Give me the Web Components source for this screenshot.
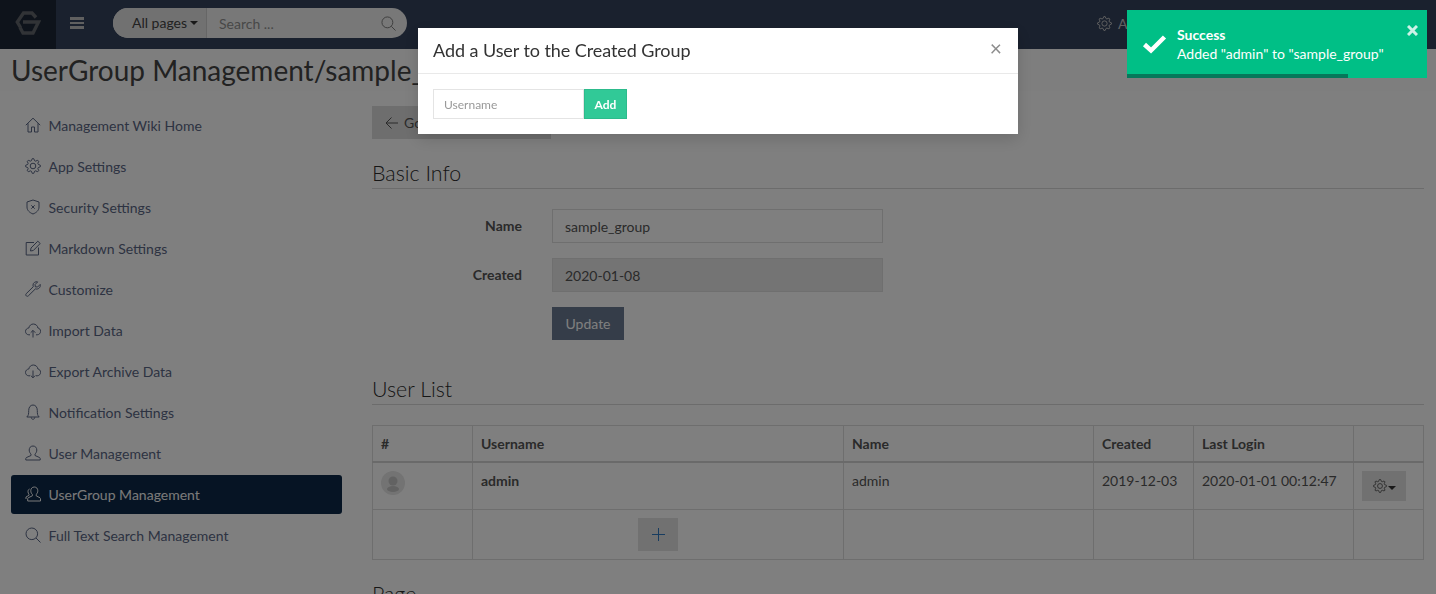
<!DOCTYPE html>
<html>
<head>
<meta charset="utf-8">
<title>UserGroup Management</title>
<style>
  html, body { margin: 0; height: 100%; overflow: hidden; }
  body { font-family: Lato, "Liberation Sans", sans-serif; font-size: 14px; color: #555; background: #fff; }
</style>
</head>
<body>
<app-navbar></app-navbar>
<page-title>UserGroup Management/sample_group</page-title>
<admin-layout>
  <admin-sidebar slot="side">
    <side-item icon="home">Management Wiki Home</side-item>
    <side-item icon="gear">App Settings</side-item>
    <side-item icon="shield">Security Settings</side-item>
    <side-item icon="edit">Markdown Settings</side-item>
    <side-item icon="wrench">Customize</side-item>
    <side-item icon="upload">Import Data</side-item>
    <side-item icon="download">Export Archive Data</side-item>
    <side-item icon="bell">Notification Settings</side-item>
    <side-item icon="user">User Management</side-item>
    <side-item icon="users" active>UserGroup Management</side-item>
    <side-item icon="search">Full Text Search Management</side-item>
  </admin-sidebar>
  <back-button>Go back to list</back-button>
  <section-heading>Basic Info</section-heading>
  <basic-form></basic-form>
  <section-heading style="margin-top:35px">User List</section-heading>
  <user-table></user-table>
  <section-heading style="margin-top:20px">Page</section-heading>
</admin-layout>
<modal-backdrop></modal-backdrop>
<add-user-modal></add-user-modal>
<toast-note heading="Success">Added "admin" to "sample_group"</toast-note>

<script>
'use strict';

// 8 tooth outline for the gear icon
function gearPath() {
  let d = '';
  for (let i = 0; i < 32; i++) {
    const step = i % 4;
    const r = (step === 0 || step === 1) ? 7.4 : 5.5;
    const a = (i / 32) * Math.PI * 2 - 0.1;
    d += (i ? 'L' : 'M') + (8 + r * Math.cos(a)).toFixed(2) + ' ' + (8 + r * Math.sin(a)).toFixed(2);
  }
  return d + 'z';
}

const ICONS = {
  home: '<path d="M.8 8.200 8 1.200l7.200 7M3 6.300V15H6.500V10H9.500V15H13V6.300"/>',
  gear: `<circle cx="8" cy="8" r="2.800"/><path d="${gearPath()}" stroke-linejoin="round"/>`,
  shield: '<path d="M8 1 14 3V8c0 3.400-2.700 5.700-6 7C4.700 13.700 2 11.400 2 8V3z"/><path d="M6.300 6.300 9.700 9.700M9.700 6.300 6.300 9.700"/>',
  edit: '<path d="M9 2.500H1.200V15H13.500V7.500"/><path d="M5.500 11 6 8 12.800 1.200 15.200 3.500 8.300 10.500z"/>',
  wrench: '<path d="M15.200 3.400 12.600 6 10.300 5.800 10.100 3.500 12.700 .9C10.500.2 8.100 1.600 8 4c0 .7.100 1.200.3 1.700L1.200 12.700c-.9.900-.3 2.600 1.100 2.600.4 0 .8-.2 1.100-.5l7-6.900c2.700.9 5.700-1.700 4.800-4.500z"/>',
  upload: '<path d="M5 12.800H3.800C2 12.800.5 11.300.5 9.400.5 7.600 2 6.100 3.800 6 4.300 3.500 6.200 2 8.300 2c2.400 0 4.400 1.800 4.600 4 1.500.2 2.700 1.600 2.700 3.300 0 1.900-1.500 3.500-3.400 3.500H11"/><path d="M8 15.500V8.500M5.700 10.700 8 8.400 10.300 10.700"/>',
  download: '<path d="M5 12.800H3.800C2 12.800.5 11.300.5 9.400.5 7.600 2 6.100 3.800 6 4.300 3.500 6.200 2 8.300 2c2.400 0 4.400 1.800 4.600 4 1.500.2 2.700 1.600 2.700 3.300 0 1.900-1.500 3.500-3.400 3.500H11"/><path d="M8 7.500V14.800M5.700 12.500 8 14.800 10.300 12.500"/>',
  bell: '<path d="M1.800 13C3.600 11.500 3.700 9.700 3.700 6.500 3.700 3.200 5.500 1 8 1s4.300 2.200 4.300 5.500c0 3.200.1 5 1.900 6.500z"/><path d="M6.200 13.300c.1 1.200.9 2 1.800 2s1.700-.8 1.800-2"/>',
  user: '<path d="M8 1C5.600 1 4.200 2.800 4.200 5c0 1.600.7 3.200 1.800 4v1.500L1.300 12.600c-.3.200-.5.500-.5.900V15H15.200V13.500c0-.4-.2-.7-.5-.9L10 10.500V9C11.100 8.200 11.800 6.600 11.800 5 11.800 2.800 10.400 1 8 1z"/>',
  users: '<path d="M9.300 1C7.100 1 5.800 2.600 5.800 4.700c0 1.500.6 3 1.600 3.700v1.400L3.200 11.800c-.3.200-.5.500-.5.800V15H15.500V12.600c0-.3-.2-.6-.5-.8L11.200 9.800V8.400c1-.7 1.600-2.200 1.600-3.700C12.800 2.600 11.500 1 9.300 1z"/><path d="M4.500 3C3.300 3.500 3 4.600 3 5.700c0 1 .4 1.900 1 2.500v1.100L1 11V13"/>',
  search: '<circle cx="6.800" cy="6.800" r="5.800"/><path d="M11 11 15.500 15.500"/>'
};

function iconSvg(name, size) {
  return `<svg width="${size}" height="${size}" viewBox="0 0 16 16" fill="none" stroke="currentColor" stroke-width="1" aria-hidden="true">${ICONS[name]}</svg>`;
}

function makeShadow(el, html) {
  el.attachShadow({ mode: 'open' }).innerHTML = html;
}

customElements.define('app-navbar', class extends HTMLElement {
  constructor() {
    super();
    makeShadow(this, `
      <style>
        :host { display: flex; align-items: center; height: 49px; background: #34425c; color: #c4c4c4; }
        .logo { width: 56px; height: 49px; padding-bottom: 3px; box-sizing: border-box; background: #1d2636; display: flex; align-items: center; justify-content: center; }
        .burger { width: 14px; margin: -3px 0 0 14px; display: grid; gap: 2px; }
        .burger i { display: block; height: 2.500px; background: #c0c0c0; }
        .search { margin: -3px 0 0 29px; width: 294px; height: 30px; border-radius: 15px; overflow: hidden; display: flex; background: #f0f0f0; font-size: 14px; }
        .scope { width: 94px; background: #e2e2e2; color: #444; display: flex; align-items: center; justify-content: center; gap: 3px; padding-left: 11px; box-sizing: border-box; border-right: 1px solid #ccc; }
        .scope span:first-child { margin-top: -1px; }
        .caret { border: 4px solid transparent; border-top-color: #333; border-bottom: 0; }
        .field { flex: 1; display: flex; align-items: center; justify-content: space-between; padding: 0 11px 0 12px; color: #909090; }
        .field svg { color: #777; }
        .admin { margin: -3px 309px 0 auto; display: flex; align-items: center; gap: 6px; width: 30px; white-space: nowrap; }
        .admin svg { flex: none; }
      </style>
      <div class="logo">
        <svg width="26" height="24" viewBox="0 0 26 24" fill="none" stroke="#62666c" stroke-width="3.400">
          <path d="M21 6.500 17 2H8.500L2.300 11 5.500 16.500"/>
          <path d="M8 11H23.500L18 22H8L5 16.500"/>
        </svg>
      </div>
      <div class="burger"><i></i><i></i><i></i></div>
      <div class="search">
        <div class="scope"><span>All pages</span><span class="caret"></span></div>
        <div class="field">Search ...${iconSvg('search', 15)}</div>
      </div>
      <div class="admin">${iconSvg('gear', 15)}<span>Admin</span></div>`);
  }
});

customElements.define('page-title', class extends HTMLElement {
  constructor() {
    super();
    makeShadow(this, `
      <style>
        :host { display: block; height: 42px; padding-left: 11px; font-size: 28px; line-height: 42px; color: #444; white-space: nowrap; background: #fdfdfd; overflow: hidden; }
      </style><slot></slot>`);
  }
});

customElements.define('admin-layout', class extends HTMLElement {
  constructor() {
    super();
    makeShadow(this, `
      <style>
        :host { display: grid; grid-template-columns: 331px 1fr; column-gap: 30px; padding: 15px 12px 0 11px; }
      </style>
      <div><slot name="side"></slot></div>
      <div><slot></slot></div>`);
  }
});

customElements.define('admin-sidebar', class extends HTMLElement {
  constructor() {
    super();
    makeShadow(this, `<style>:host { display: grid; gap: 2px; }</style><slot></slot>`);
  }
});

customElements.define('side-item', class extends HTMLElement {
  connectedCallback() {
    if (this.shadowRoot) return;
    makeShadow(this, `
      <style>
        :host { display: flex; align-items: center; gap: 7.500px; height: 39px; padding-left: 14px; color: #5a6684; border-radius: 3px; font-size: 14px; }
        :host([active]) { background: #0c2848; color: #f4f4f4; }
        svg { flex: none; margin-top: -1px; }
      </style>
      ${iconSvg(this.getAttribute('icon'), 16)}<span><slot></slot></span>`);
  }
});

customElements.define('back-button', class extends HTMLElement {
  constructor() {
    super();
    makeShadow(this, `
      <style>
        :host { display: flex; align-items: center; gap: 5px; width: 179px; height: 33px; box-sizing: border-box; padding-left: 13px; background: #dcdcdc; color: #555; }
        svg { flex: none; }
      </style>
      <svg width="14" height="14" viewBox="0 0 14 14" fill="none" stroke="currentColor"><path d="M13 7H1.500M6.500 1.500 1 7l5.500 5.500"/></svg>
      <span><slot></slot></span>`);
  }
});

customElements.define('section-heading', class extends HTMLElement {
  constructor() {
    super();
    makeShadow(this, `
      <style>
        :host { display: block; margin-top: 20px; height: 29px; font-size: 21.400px; font-weight: 300; line-height: 29px; color: #2c2c2c; border-bottom: 1px solid #d8d8d8; }
      </style><slot></slot>`);
  }
});

customElements.define('basic-form', class extends HTMLElement {
  constructor() {
    super();
    makeShadow(this, `
      <style>
        :host { display: grid; grid-template-columns: 150px 331px; column-gap: 30px; row-gap: 15px; margin-top: 20px; align-items: center; }
        label { text-align: right; font-weight: 700; margin-top: -2px; }
        .box { height: 34px; box-sizing: border-box; border: 1px solid #dedede; padding: 0 12px; display: flex; align-items: center; color: #555; }
        .ro { background: #e8e8e8; }
        .btn { width: 72px; height: 33px; display: flex; align-items: center; justify-content: center; background: #6a7a92; color: #fff; }
      </style>
      <label>Name</label><div class="box">sample_group</div>
      <label>Created</label><div class="box ro">2020-01-08</div>
      <span></span><div class="btn">Update</div>`);
  }
});

customElements.define('user-table', class extends HTMLElement {
  constructor() {
    super();
    makeShadow(this, `
      <style>
        :host { display: block; margin-top: 20px; }
        table { width: 1052px; border-collapse: collapse; table-layout: fixed; color: #555; }
        th, td { border: 1px solid #dcdcdc; padding: 8px; text-align: left; vertical-align: top; line-height: 20px; }
        th { height: 19px; line-height: 19px; border-bottom: 2px solid #d4d4d4; }
        .avatar { display: block; width: 24px; height: 24px; }
        .row td { height: 30px; }
        .add td { height: 33px; }
        .plus { width: 40px; height: 33px; margin: 0 auto; background: #e2e2e2; color: #2e78c0; display: flex; align-items: center; justify-content: center; }
        .gear { width: 44px; height: 30px; background: #e2e2e2; display: flex; align-items: center; justify-content: center; gap: 1px; color: #555; }
        .caret { border: 4px solid transparent; border-top-color: #333; border-bottom: 0; margin-top: 3px; }
      </style>
      <table>
        <colgroup><col style="width:100px"><col style="width:371px"><col style="width:250px"><col style="width:100px"><col style="width:160px"><col></colgroup>
        <tr><th>#</th><th>Username</th><th>Name</th><th>Created</th><th>Last Login</th><th></th></tr>
        <tr class="row">
          <td><svg class="avatar" viewBox="0 0 24 24"><circle cx="12" cy="12" r="12" fill="#e6e6e6"/><circle cx="12" cy="10" r="4.500" fill="#c4c4c4"/><ellipse cx="12" cy="18" rx="6" ry="3" fill="#c4c4c4"/></svg></td>
          <td><b>admin</b></td><td>admin</td><td>2019-12-03</td><td>2020-01-01 00:12:47</td>
          <td><div class="gear">${iconSvg('gear', 14)}<span class="caret"></span></div></td>
        </tr>
        <tr class="add">
          <td></td>
          <td><div class="plus"><svg width="13" height="13" viewBox="0 0 13 13" stroke="currentColor"><path d="M6.500 0V13M0 6.500H13"/></svg></div></td>
          <td></td><td></td><td></td><td></td>
        </tr>
      </table>`);
  }
});

customElements.define('modal-backdrop', class extends HTMLElement {
  constructor() {
    super();
    makeShadow(this, `<style>:host { position: fixed; inset: 0; background: rgba(0,0,0,.5); }</style>`);
  }
});

customElements.define('add-user-modal', class extends HTMLElement {
  constructor() {
    super();
    makeShadow(this, `
      <style>
        :host { position: fixed; left: 418px; top: 28px; width: 600px; background: #fff; box-shadow: 0 5px 15px rgba(0,0,0,.15); display: block; }
        header { height: 46px; box-sizing: border-box; border-bottom: 1px solid #e9e9e9; padding: 0 15px; display: flex; align-items: center; justify-content: space-between; }
        h4 { margin: -2px 0 0; font-size: 18px; font-weight: 400; letter-spacing: -.07px; color: #333; }
        .close { color: #8c8c8c; font-size: 21px; line-height: 1; margin-top: -6px; margin-right: 1px; }
        .body { padding: 15px; display: flex; height: 30px; }
        .input { width: 151px; box-sizing: border-box; border: 1px solid #e4e4e4; padding-left: 10px; font-size: 12px; color: #999; display: flex; align-items: center; }
        .add { width: 43px; background: #31c997; border: 1px solid #2dbb8c; box-sizing: border-box; color: #fff; font-size: 12px; font-weight: 700; display: flex; align-items: center; justify-content: center; }
      </style>
      <header><h4>Add a User to the Created Group</h4><span class="close">×</span></header>
      <div class="body"><div class="input">Username</div><div class="add">Add</div></div>`);
  }
});

customElements.define('toast-note', class extends HTMLElement {
  connectedCallback() {
    if (this.shadowRoot) return;
    makeShadow(this, `
      <style>
        :host { position: fixed; left: 1127px; top: 10px; width: 300px; height: 68px; background: #00bf86; color: #fff; font-size: 14px; display: block; box-sizing: border-box; padding: 15px 0 0 50px; line-height: 19px; }
        b { display: block; }
        .check { position: absolute; left: 15px; top: 24px; }
        .x { position: absolute; right: 9px; top: 15px; }
        .bar { position: absolute; left: 0; bottom: 0; width: 221px; height: 4px; background: #06785a; }
      </style>
      <svg class="check" width="25" height="20" viewBox="0 0 25 20" fill="none" stroke="#fff" stroke-width="4.500"><path d="M2.500 10.500 9 16.500 22.500 3"/></svg>
      <svg class="x" width="11" height="11" viewBox="0 0 11 11" stroke="#ccf2e7" stroke-width="3" fill="none"><path d="M1 1 10 10M10 1 1 10"/></svg>
      <b>${this.getAttribute('heading')}</b><slot></slot>
      <div class="bar"></div>`);
  }
});
</script>
</body>
</html>
